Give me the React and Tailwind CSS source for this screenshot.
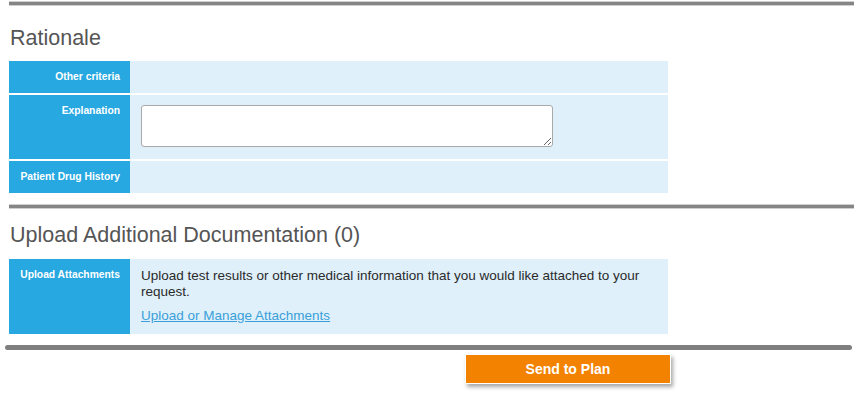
import React from "react";

const labelCell =
  "w-[121px] shrink-0 bg-[#27a8e1] pr-[10px] pt-[10px] text-right text-[10.3px] font-bold leading-3 text-white";

function Rule() {
  return <div className="ml-[9px] mr-[11px] h-[5px] border-y border-[#cfcfcf] bg-[#858585]" />;
}

export default function App() {
  return (
    <div
      className="h-[416px] w-[865px] overflow-hidden bg-white pt-[1px]"
      style={{ fontFamily: '"Liberation Sans", Arial, sans-serif' }}
    >
      <Rule />

      <h2 className="ml-[10px] mt-[20px] text-[21.5px] leading-6 text-[#555]">Rationale</h2>

      {/* rationale table */}
      <div className="ml-[9px] mt-[11px] w-[659px]">
        <div className="flex h-[32px]">
          <div className={labelCell}>Other criteria</div>
          <div className="flex-1 bg-[#dff0fa]" />
        </div>
        <div className="flex h-[66px] border-t-2 border-white/60">
          <div className={labelCell}>Explanation</div>
          <div className="flex-1 bg-[#dff0fa] pl-[11px] pt-[10px]">
            <textarea className="block h-[42px] w-[412px] rounded-[3px] border border-[#a9a9a9] bg-white" />
          </div>
        </div>
        <div className="flex h-[34px] border-t-2 border-white/60">
          <div className={labelCell}>Patient Drug History</div>
          <div className="flex-1 bg-[#dff0fa]" />
        </div>
      </div>

      <div className="mt-[11px]">
        <Rule />
      </div>

      <h2 className="ml-[10px] mt-[14px] text-[21.5px] leading-6 text-[#555]">
        Upload Additional Documentation (0)
      </h2>

      {/* upload table */}
      <div className="ml-[9px] mt-[12px] flex h-[75px] w-[659px]">
        <div className={labelCell}>Upload Attachments</div>
        <div className="flex-1 bg-[#dff0fa] pl-[11px] pr-[10px] pt-[9px]">
          <p className="text-[13.5px] leading-4 text-[#2a2a2a]">
            Upload test results or other medical information that you would like attached to your
            request.
          </p>
          <a href="#" className="mt-[8px] block text-[13.5px] leading-4 text-[#3a9fd9] underline">
            Upload or Manage Attachments
          </a>
        </div>
      </div>

      <div className="ml-[5px] mt-[11px] h-[5px] w-[847px] rounded-full bg-[#7f7f7f]" />

      <button
        type="button"
        className="ml-[465px] mt-[4px] block h-[30px] w-[206px] border border-white bg-[#f38200] text-[14px] font-bold text-white shadow-[2px_3px_4px_rgba(0,0,0,0.35)]"
      >
        Send to Plan
      </button>
    </div>
  );
}
